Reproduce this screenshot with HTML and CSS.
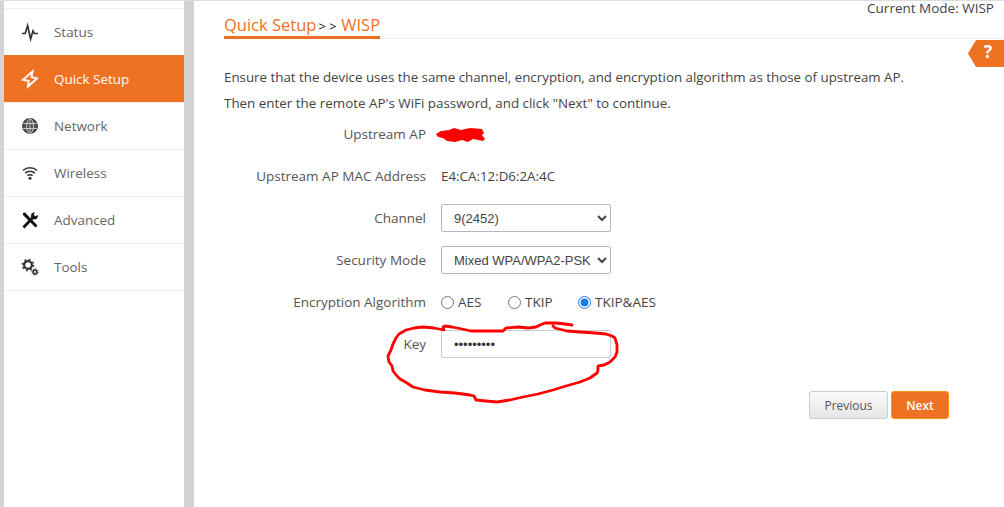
FILE: index.html
```html
<!DOCTYPE html>
<html lang="en">
<head>
<meta charset="utf-8">
<title>Quick Setup</title>
<link rel="stylesheet" href="styles.css">
</head>
<body>
<div class="page">
  <nav class="sidebar">
    <a class="nav-item"><svg class="nav-icon" viewBox="0 0 20 20"><path d="M2 11.5h3.2L7.6 3.5l3 13.5 2.4-8 1.4 2.5H18" fill="none" stroke="#333" stroke-width="1.7"/></svg>Status</a>
    <a class="nav-item active"><svg class="nav-icon" viewBox="0 0 20 20"><path d="M12.5 2.5 11.5 8 17 9.5 8 17.5 8.8 12 3 10.8Z" fill="none" stroke="#fff" stroke-width="1.9" stroke-linejoin="miter"/></svg>Quick Setup</a>
    <a class="nav-item"><svg class="nav-icon" viewBox="0 0 20 20"><circle cx="10" cy="10" r="7.3" fill="#555" stroke="#333" stroke-width="1.3"/><ellipse cx="10" cy="10" rx="3.4" ry="7.3" fill="none" stroke="#ddd" stroke-width=".8"/><path d="M10 3v14M3 7.5h14M3 12.5h14" stroke="#ddd" stroke-width=".8"/></svg>Network</a>
    <a class="nav-item"><svg class="nav-icon" viewBox="0 0 20 20"><path d="M3 7.5c4-3.6 10-3.6 14 0M5.2 10.2c2.8-2.4 6.8-2.4 9.6 0M7.4 12.7c1.6-1.2 3.6-1.2 5.2 0" fill="none" stroke="#333" stroke-width="1.6"/><circle cx="10" cy="15.2" r="1.5" fill="#333"/></svg>Wireless</a>
    <a class="nav-item"><svg class="nav-icon" viewBox="0 0 20 20"><path d="M3 3 5 2.5 17.5 15.5 15.5 17.5 3 5Z" fill="#111"/><path d="M3.5 17.5 12 8.5" stroke="#111" stroke-width="2.8"/><path d="M11.5 3.6 14 2.2 15 2.6 13.6 4.5 15.4 6.4 17.4 5 18 6.4 16.5 9 13 9.6 10.8 7.2Z" fill="#111"/></svg>Advanced</a>
    <a class="nav-item"><svg class="nav-icon" viewBox="0 0 20 20"><circle cx="8" cy="8" r="3.9" fill="none" stroke="#333" stroke-width="2.2"/><circle cx="8" cy="8" r="5.6" fill="none" stroke="#333" stroke-width="1.6" stroke-dasharray="1.8 2.6"/><circle cx="15" cy="15" r="1.9" fill="none" stroke="#333" stroke-width="1.6"/><circle cx="15" cy="15" r="3.2" fill="none" stroke="#333" stroke-width="1" stroke-dasharray="1.2 1.3"/></svg>Tools</a>
  </nav>
  <main class="main">
    <header class="header">
      <h1 class="title"><span class="crumb">Quick Setup</span><span class="sep">&gt;&gt;</span><span class="crumb">WISP</span></h1>
      <span class="mode">Current Mode: WISP</span>
    </header>
    <span class="help">?</span>
    <p class="intro">Ensure that the device uses the same channel, encryption, and encryption algorithm as those of upstream AP.</p>
    <p class="intro">Then enter the remote AP's WiFi password, and click "Next" to continue.</p>
    <form class="form">
      <span class="label">Upstream AP</span><span class="value"></span>
      <span class="label">Upstream AP MAC Address</span><span class="value">E4:CA:12:D6:2A:4C</span>
      <span class="label">Channel</span>
      <select class="control"><option>9(2452)</option></select>
      <span class="label">Security Mode</span>
      <select class="control"><option>Mixed WPA/WPA2-PSK</option></select>
      <span class="label">Encryption Algorithm</span>
      <span class="radios">
        <label class="radio r1"><input type="radio" name="alg">AES</label>
        <label class="radio r2"><input type="radio" name="alg">TKIP</label>
        <label class="radio"><input type="radio" name="alg" checked>TKIP&amp;AES</label>
      </span>
      <span class="label">Key</span>
      <input class="control key" type="password" value="123456789">
    </form>
    <div class="actions">
      <button class="btn" type="button">Previous</button>
      <button class="btn primary" type="button">Next</button>
    </div>
  </main>
  <svg class="ink" viewBox="0 0 1004 507" aria-hidden="true">
    <path class="ink-line" d="M572 325 565 324 556 323 545 323 540 325 536 327 528 328 518 327 506 328 503 331 492 331 480 331 471 331 462 329 452 327 445 326 443 327 444 330 434 328 423 327 414 328 406 330 399 334 396 338 393 344 391 350 388 356 389 362 392 366 393 371 397 376 400 379 407 383 413 387 425 390 440 392 455 393 470 395 474 396 476 400 486 401 497 402 510 400 523 397 538 394 553 390 566 386 580 382 590 378 597 373 598 370 598 366 604 365 610 362 615 357 617 352 617 345 615 338 612 336 606 334 595 333 580 332 567 331 555 328 553 326"/>
    <path class="ink-blob" d="M436 134 441 131 449 130 454 128 461 130 470 128 482 129 484 133 482 135 485 139 483 141 473 139 468 142 462 140 455 142 447 141 443 138 438 137Z"/>
  </svg>
</div>
</body>
</html>
```

FILE: styles.css
```css
* { box-sizing: border-box; }
html, body { margin: 0; height: 100%; overflow: hidden; }
body {
  font-family: "Open Sans", "Noto Sans", sans-serif;
  font-size: 13.33px;
  color: #444;
  background: #fff;
}
.page {
  position: relative;
  height: 507px;
  display: grid;
  grid-template-columns: 194px 1fr;
  border-top: 1px solid #ddd;
}
.sidebar {
  background: #fff;
  border-left: 4px solid #d3d3d3;
  border-right: 10px solid #d3d3d3;
  padding-top: 7px;
}
.nav-item {
  display: flex;
  align-items: center;
  height: 47px;
  border-top: 1px solid #eee;
  padding-left: 16px;
  color: #666;
  font-size: 13.45px;
}
.nav-item:last-child { border-bottom: 1px solid #eee; height: 48px; }
.nav-item.active { background: #ef7122; color: #fff; border-top-color: #ef7122; }
.nav-icon { width: 20px; height: 20px; margin-right: 14px; flex: none; }
.main { position: relative; min-width: 0; padding-left: 30px; }
.header {
  display: flex;
  justify-content: space-between;
  height: 38px;
  border-bottom: 1px solid #eee;
}
.title {
  margin: 0;
  height: 38px;
  padding-top: 11px;
  font-size: 16.5px;
  line-height: 26px;
  font-weight: 400;
  border-bottom: 3px solid #ee6f23;
  color: #f07122;
  white-space: nowrap;
}
.sep { color: #111; margin: 0 1px 0 2px; letter-spacing: 3.5px; font-size: 13px; }
.mode { padding: 0 10px 0 0; line-height: 15px; color: #444; font-size: 13.5px; }
.help {
  position: absolute;
  top: 39px;
  right: 0;
  width: 36px;
  height: 27px;
  padding-left: 4px;
  background: #ef7122;
  clip-path: polygon(0 50%, 8px 0, 100% 0, 100% 100%, 8px 100%);
  color: #fff;
  font-size: 18px;
  font-weight: 700;
  line-height: 23px;
  text-align: center;
}
.intro { margin: 0; line-height: 26px; color: #444; }
.intro:first-of-type { margin-top: 25px; }
.intro + .intro { font-size: 13.4px; }
.form {
  display: grid;
  grid-template-columns: 202px 170px;
  column-gap: 15px;
  row-gap: 14px;
  grid-auto-rows: 28px;
  align-items: center;
  margin-top: 4px;
  font-size: 13.5px;
}
.label { text-align: right; color: #555; }
.control {
  width: 170px;
  height: 28px;
  border: 1px solid #b4b8bf;
  border-radius: 2px;
  background: #fff;
  color: #444;
  font: 13px "Liberation Sans", Arial, sans-serif;
  padding: 0 8px;
}
select.control { padding: 0 0 0 8px; }
.key { border-color: #ccc; padding: 0 12px; color: #333; }
.value { color: #444; font-size: 13.35px; }
.radios { display: flex; white-space: nowrap; }
.radio { display: inline-flex; align-items: center; flex: none; color: #444; }
.radio input { width: 13px; height: 13px; margin: 0 4px 0 0; accent-color: #1a7cf0; }
.r1 { width: 67px; }
.r2 { width: 70px; }
.actions {
  display: flex;
  justify-content: flex-end;
  gap: 3px;
  margin-top: 33px;
  padding-right: 55px;
}
.btn {
  height: 28px;
  width: 79px;
  border: 1px solid #ccc;
  border-radius: 3px;
  background: linear-gradient(#fafafa, #e6e6e6);
  color: #555;
  font: 12px "Open Sans", sans-serif;
}
.btn.primary {
  width: 58px;
  background: #ef7122;
  border-color: #f8941d;
  color: #fff;
  font-weight: 600;
}
.ink {
  position: absolute;
  top: -1px;
  left: 0;
  width: 1004px;
  height: 507px;
  pointer-events: none;
}
.ink-line { fill: none; stroke: #f00; stroke-width: 2.8; stroke-linejoin: round; stroke-linecap: round; }
.ink-blob { fill: #f00; }
```
